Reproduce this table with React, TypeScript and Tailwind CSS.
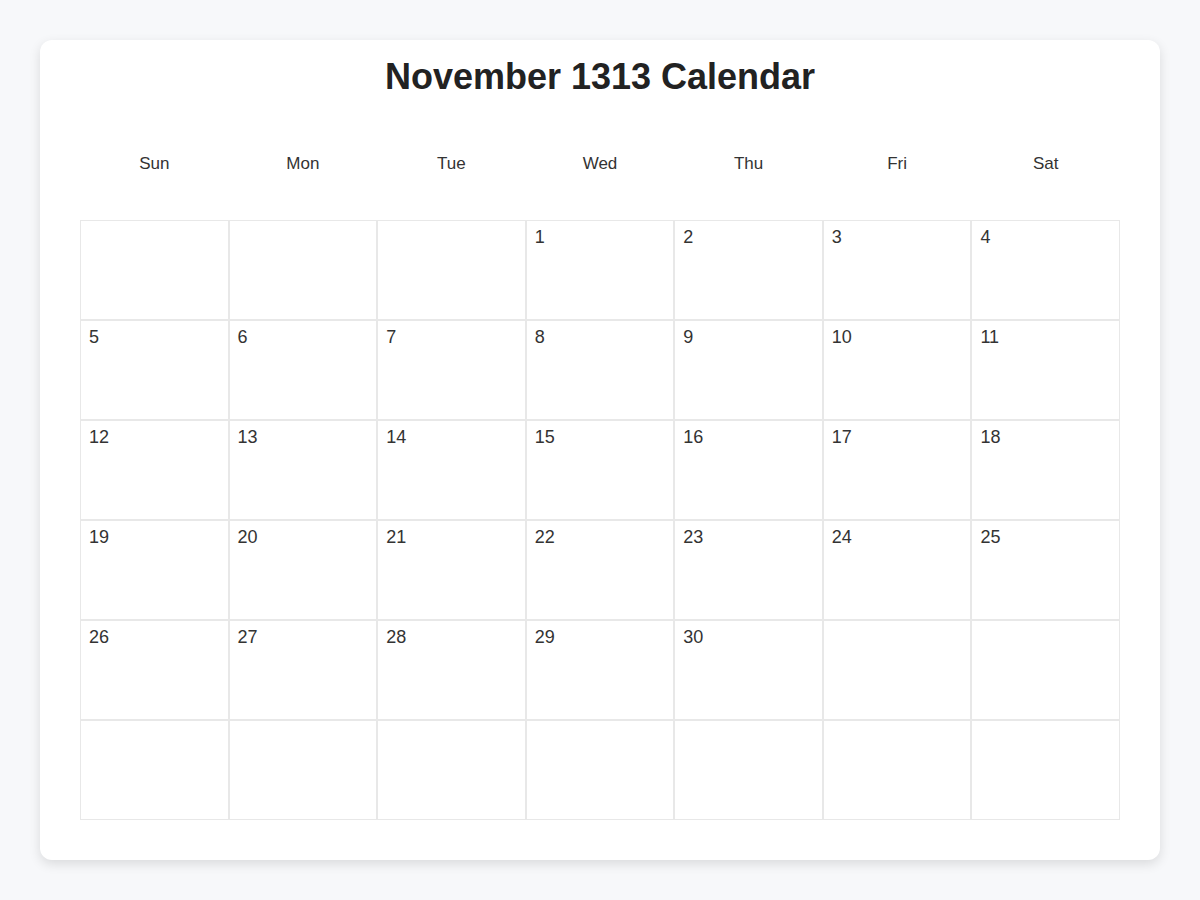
import React from "react";

const dayNames = ["Sun", "Mon", "Tue", "Wed", "Thu", "Fri", "Sat"];

// November 1313 starts on a Wednesday, 30 days, 6 rows
const buildCells = () => {
  const cells: (number | null)[] = [];
  for (let i = 0; i < 3; i++) cells.push(null);
  for (let d = 1; d <= 30; d++) cells.push(d);
  while (cells.length < 42) cells.push(null);
  return cells;
};

const App = () => {
  const cells = buildCells();
  return (
    <div className="min-h-screen w-full bg-[#f7f8fa] p-10 font-['Liberation_Sans',Arial,sans-serif]">
      <div className="w-[1120px] h-[820px] bg-white rounded-xl shadow-[0_4px_12px_rgba(0,0,0,0.12)] px-10 pt-[17px]">
        <h1 className="text-center text-[36px] leading-[40px] font-bold text-[#222]">
          November 1313 Calendar
        </h1>
        <div className="grid grid-cols-7 pt-[55px] pb-[44px]">
          {dayNames.map((d) => (
            <div key={d} className="text-center text-[17px] leading-6 text-[#333]">
              {d}
            </div>
          ))}
        </div>
        <div className="grid grid-cols-7">
          {cells.map((c, i) => (
            <div
              key={i}
              className="h-[100px] border border-[#e8e8e8] px-2 pt-[6px] text-[18px] leading-[20px] text-[#333]"
            >
              {c}
            </div>
          ))}
        </div>
      </div>
    </div>
  );
};

export default App;
